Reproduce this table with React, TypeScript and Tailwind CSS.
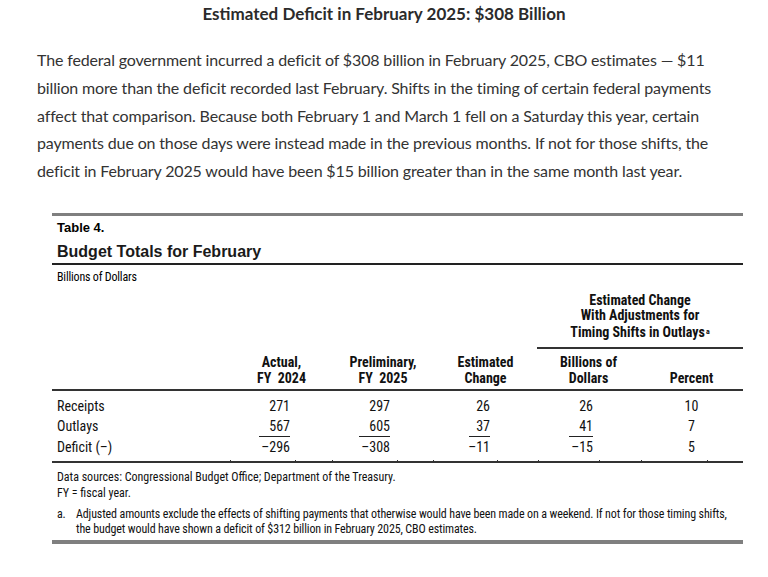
import React from 'react';

const ticks = [230, 295, 332, 397, 433, 497, 538, 599, 641, 707];

const rows = [
  { label: 'Receipts', v: ['271', '297', '26', '26', '10'], under: false },
  { label: 'Outlays', v: ['567', '605', '37', '41', '7'], under: true },
  { label: 'Deficit (\u2013)', v: ['\u2013296', '\u2013308', '\u201311', '\u201315', '5'], under: false },
];

const numCell = ['pr-[42px]', 'pr-[44px]', 'pr-[47px]', 'pr-[47px]'];
const numW = ['min-w-[31px]', 'min-w-[31px]', 'min-w-[21px]', 'min-w-[24px]'];
const cols = 'grid grid-cols-[179px_101px_102px_103px_103px_103px]';

export default function App() {
  return (
    <div className="w-[768px] h-[577px] bg-white overflow-hidden">
      {/* heading + intro paragraph */}
      <div className="font-['Lato',sans-serif] text-[#333]">
        <h1 className="pt-[3px] text-center text-[17px] leading-[22px] font-bold text-[#2b2b2b]">
          Estimated Deficit in February 2025: $308 Billion
        </h1>
        <p className="mt-[21px] pl-[37px] text-[16px] tracking-[-0.15px] leading-[27.75px] whitespace-nowrap">
          The federal government incurred a deficit of $308 billion in February 2025, CBO estimates — $11
          <br />
          billion more than the deficit recorded last February. Shifts in the timing of certain federal payments
          <br />
          affect that comparison. Because both February 1 and March 1 fell on a Saturday this year, certain
          <br />
          payments due on those days were instead made in the previous months. If not for those shifts, the
          <br />
          deficit in February 2025 would have been $15 billion greater than in the same month last year.
        </p>
      </div>

      {/* Table 4 */}
      <div className="ml-[52px] mt-[28px] w-[691px] text-black font-['Roboto_Condensed','Liberation_Sans_Narrow',sans-serif]">
        <div className="h-[3px] bg-[#7f7f7f]" />
        <div className="pl-[5px] pt-[4px] text-[13px] leading-[16px] font-bold font-['Liberation_Sans',sans-serif]">
          Table 4.
        </div>
        <div className="pl-[5px] pt-[6px] text-[16px] leading-[20px] font-bold font-['Liberation_Sans',sans-serif] text-[#1a1a1a]">
          Budget Totals for February
        </div>
        <div className="mt-[1px] h-[2px] bg-[#222]" />
        <div className="pl-[5px] pt-[5px] text-[12px] leading-[14px] tracking-[-0.2px]">Billions of Dollars</div>

        {/* column heads */}
        <div className={`${cols} text-[14px] font-bold text-[#111]`}>
          <div className="col-start-5 col-span-2 pt-[9px] text-center leading-[15.5px]">
            Estimated Change
            <br />
            With Adjustments for
            <br />
            Timing Shifts in Outlays<span className="text-[8px] font-bold align-[3px] ml-[1px]">a</span>
            <div className="mt-[7px] h-[2px] bg-[#333]" />
          </div>
        </div>
        <div className={`${cols} items-end pt-[4.5px] text-[14px] font-bold leading-[16px] text-[#111]`}>
          <div />
          <div className="text-center">
            Actual,
            <br />
            FY&nbsp;&nbsp;2024
          </div>
          <div className="text-center">
            Preliminary,
            <br />
            FY&nbsp;&nbsp;2025
          </div>
          <div className="text-center">
            Estimated
            <br />
            Change
          </div>
          <div className="text-center">
            Billions of
            <br />
            Dollars
          </div>
          <div className="text-center">Percent</div>
        </div>
        <div className="mt-[3px] h-[2px] bg-[#333]" />

        {/* body */}
        <div className="pt-[5px] pb-[4px] text-[14px] leading-[20.5px] text-[#111]">
          {rows.map((r) => (
            <div key={r.label} className={cols}>
              <div className="pl-[5px]">{r.label}</div>
              {r.v.slice(0, 4).map((x, i) => (
                <div key={i} className={`flex justify-end ${numCell[i]}`}>
                  <span
                    className={`${numW[i]} whitespace-nowrap text-right leading-[18px] mt-[1px] ${
                      r.under ? 'border-b-[1.5px] border-[#222]' : ''
                    }`}
                  >
                    {x}
                  </span>
                </div>
              ))}
              <div className="text-center">{r.v[4]}</div>
            </div>
          ))}
        </div>
        <div className="relative h-[2px] bg-[#333]">
          {ticks.map((t) => (
            <span key={t} className="absolute bottom-[1px] w-[1px] h-[2px] bg-[#333]" style={{ left: t - 52 }} />
          ))}
        </div>

        {/* notes */}
        <div className="pl-[5px] pt-[6px] text-[12px] leading-[16px] text-[#111] whitespace-nowrap">
          <div>Data sources: Congressional Budget Office; Department of the Treasury.</div>
          <div>FY = fiscal year.</div>
          <div className="mt-[5.5px] flex leading-[15px] tracking-[-0.13px]">
            <span className="w-[19px] shrink-0">a.</span>
            <span>
              Adjusted amounts exclude the effects of shifting payments that otherwise would have been made on a weekend. If not for those timing shifts,
              <br />
              the budget would have shown a deficit of $312 billion in February 2025, CBO estimates.
            </span>
          </div>
        </div>
        <div className="mt-[3.5px] h-[4px] bg-[#7f7f7f]" />
      </div>
    </div>
  );
}
